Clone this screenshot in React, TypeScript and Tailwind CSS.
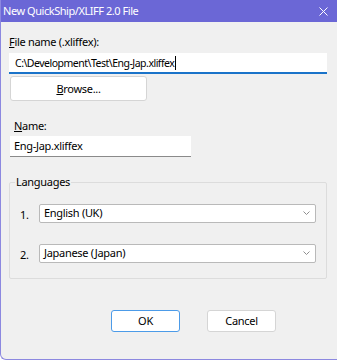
const languages = ["English (UK)", "Japanese (Japan)"]

export default function App() {
  return (
    <div className="w-[337px] h-[360px] bg-[#f0f0f0] border-l border-b border-[#8c88e0] rounded-bl-[6px] overflow-hidden flex flex-col font-['Noto_Sans',sans-serif] text-[11px] leading-[16px] tracking-[-0.3px] text-black">
      {/* title bar */}
      <div className="h-[22px] bg-[#6b67d6] flex items-center justify-between pl-[2px] pr-[9px] shrink-0">
        <span className="text-white text-[11px] tracking-[-0.45px]">New QuickShip/XLIFF 2.0 File</span>
        <svg width="9" height="9" viewBox="0 0 9 9" className="mt-[1px]">
          <path d="M0.5 0.5 L8.5 8.5 M8.5 0.5 L0.5 8.5" stroke="white" strokeWidth="1" />
        </svg>
      </div>

      <div className="flex flex-col pl-[8px] pr-[10px] pt-[12px]">
        <label>
          <span className="underline">F</span>ile name (.xliffex):
        </label>
        <div className="mt-[3px] h-[21px] bg-white border-b-2 border-[#1a73c9] flex items-center pl-[6px]">
          <span className="text-[10.5px] tracking-[-0.5px]">C:\Development\Test\Eng-Jap.xliffex</span>
          <span className="w-px h-[14px] bg-black ml-[1px]" />
        </div>
        <button className="mt-[2px] ml-[1px] w-[137px] h-[25px] bg-white border border-[#d5d5d5] rounded-[3px] flex items-center justify-center">
          <span>
            <span className="underline">B</span>rowse...
          </span>
        </button>

        <label className="mt-[17px] ml-[5px]">
          <span className="underline">N</span>ame:
        </label>
        <div className="mt-[2px] ml-[1px] w-[181px] h-[21px] bg-white border-b border-[#8a8a8a] flex items-center pl-[4px]">
          Eng-Jap.xliffex
        </div>

        <fieldset className="mt-[17px] h-[105px] border border-[#dcdcdc] rounded-[2px]">
          <legend className="ml-[5px] px-px">Languages</legend>
          <div className="flex flex-col gap-[20px] mt-[13px] px-[10px]">
            {languages.map((lang, i) => (
              <div key={lang} className="flex items-center">
                <span className="w-[19px] pt-[4px]">{i + 1}.</span>
                <div className="flex-1 h-[19px] bg-white border border-[#b9b9b9] rounded-[2px] flex items-center justify-between pl-[4px] pr-[5px]">
                  <span>{lang}</span>
                  <svg width="7" height="4" viewBox="0 0 7 4">
                    <path d="M0.5 0.5 L3.5 3.5 L6.5 0.5" stroke="#8f8f8f" strokeWidth="1" fill="none" />
                  </svg>
                </div>
              </div>
            ))}
          </div>
        </fieldset>

        <div className="flex gap-[27px] mt-[31px] pl-[102px]">
          <button className="w-[69px] h-[22px] bg-white border border-[#4c9be8] rounded-[3px]">OK</button>
          <button className="w-[69px] h-[22px] bg-white border border-[#d5d5d5] rounded-[3px]">Cancel</button>
        </div>
      </div>
    </div>
  )
}
